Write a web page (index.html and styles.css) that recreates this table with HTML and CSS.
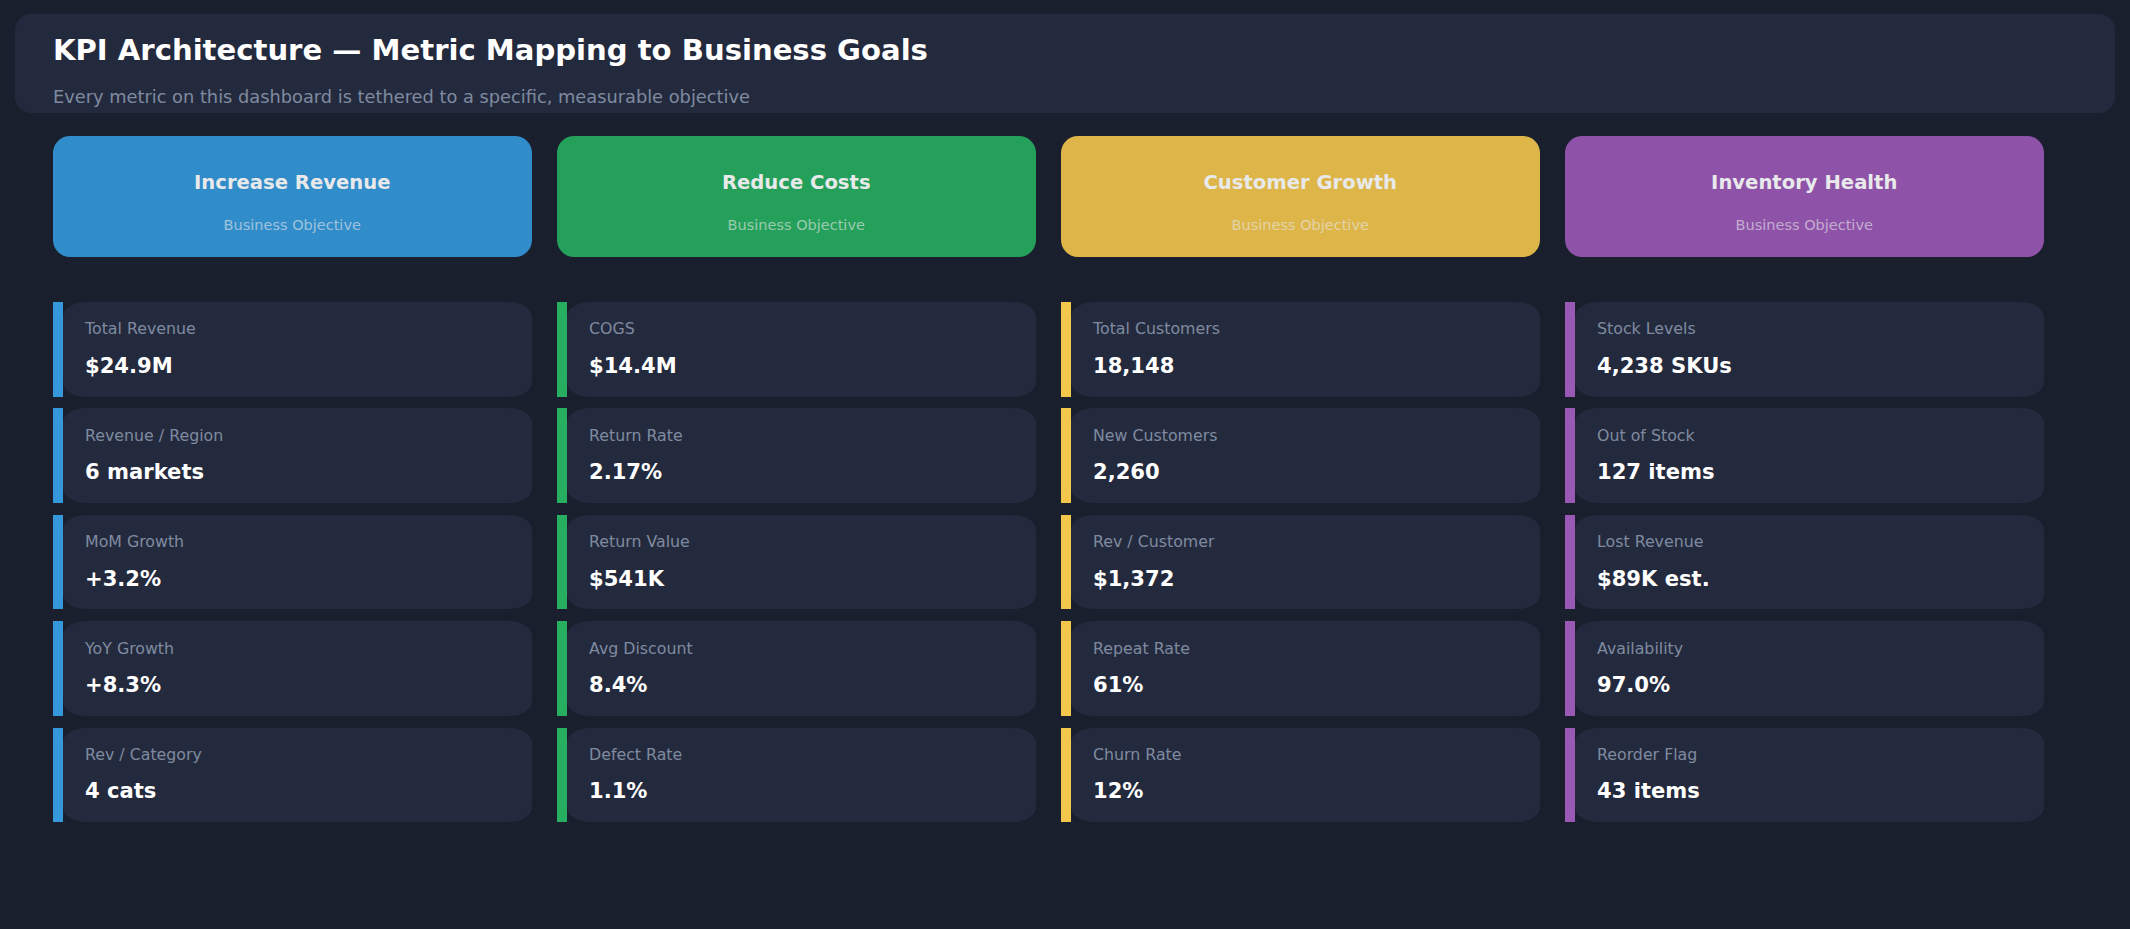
FILE: index.html
```html
<!DOCTYPE html>
<html lang="en">
<head>
<meta charset="utf-8">
<title>KPI Architecture</title>
<link rel="stylesheet" href="styles.css">
</head>
<body>
<header class="header">
  <h1 class="title">KPI Architecture — Metric Mapping to Business Goals</h1>
  <p class="subtitle">Every metric on this dashboard is tethered to a specific, measurable objective</p>
</header>
<main class="grid">
  <section class="column col-blue">
    <div class="objective"><div class="obj-title">Increase Revenue</div><div class="obj-sub">Business Objective</div></div>
    <div class="metrics">
      <div class="metric"><span class="bar"></span><div class="metric-card"><div class="label">Total Revenue</div><div class="value">$24.9M</div></div></div>
      <div class="metric"><span class="bar"></span><div class="metric-card"><div class="label">Revenue / Region</div><div class="value">6 markets</div></div></div>
      <div class="metric"><span class="bar"></span><div class="metric-card"><div class="label">MoM Growth</div><div class="value">+3.2%</div></div></div>
      <div class="metric"><span class="bar"></span><div class="metric-card"><div class="label">YoY Growth</div><div class="value">+8.3%</div></div></div>
      <div class="metric"><span class="bar"></span><div class="metric-card"><div class="label">Rev / Category</div><div class="value">4 cats</div></div></div>
    </div>
  </section>
  <section class="column col-green">
    <div class="objective"><div class="obj-title">Reduce Costs</div><div class="obj-sub">Business Objective</div></div>
    <div class="metrics">
      <div class="metric"><span class="bar"></span><div class="metric-card"><div class="label">COGS</div><div class="value">$14.4M</div></div></div>
      <div class="metric"><span class="bar"></span><div class="metric-card"><div class="label">Return Rate</div><div class="value">2.17%</div></div></div>
      <div class="metric"><span class="bar"></span><div class="metric-card"><div class="label">Return Value</div><div class="value">$541K</div></div></div>
      <div class="metric"><span class="bar"></span><div class="metric-card"><div class="label">Avg Discount</div><div class="value">8.4%</div></div></div>
      <div class="metric"><span class="bar"></span><div class="metric-card"><div class="label">Defect Rate</div><div class="value">1.1%</div></div></div>
    </div>
  </section>
  <section class="column col-yellow">
    <div class="objective"><div class="obj-title">Customer Growth</div><div class="obj-sub">Business Objective</div></div>
    <div class="metrics">
      <div class="metric"><span class="bar"></span><div class="metric-card"><div class="label">Total Customers</div><div class="value">18,148</div></div></div>
      <div class="metric"><span class="bar"></span><div class="metric-card"><div class="label">New Customers</div><div class="value">2,260</div></div></div>
      <div class="metric"><span class="bar"></span><div class="metric-card"><div class="label">Rev / Customer</div><div class="value">$1,372</div></div></div>
      <div class="metric"><span class="bar"></span><div class="metric-card"><div class="label">Repeat Rate</div><div class="value">61%</div></div></div>
      <div class="metric"><span class="bar"></span><div class="metric-card"><div class="label">Churn Rate</div><div class="value">12%</div></div></div>
    </div>
  </section>
  <section class="column col-purple">
    <div class="objective"><div class="obj-title">Inventory Health</div><div class="obj-sub">Business Objective</div></div>
    <div class="metrics">
      <div class="metric"><span class="bar"></span><div class="metric-card"><div class="label">Stock Levels</div><div class="value">4,238 SKUs</div></div></div>
      <div class="metric"><span class="bar"></span><div class="metric-card"><div class="label">Out of Stock</div><div class="value">127 items</div></div></div>
      <div class="metric"><span class="bar"></span><div class="metric-card"><div class="label">Lost Revenue</div><div class="value">$89K est.</div></div></div>
      <div class="metric"><span class="bar"></span><div class="metric-card"><div class="label">Availability</div><div class="value">97.0%</div></div></div>
      <div class="metric"><span class="bar"></span><div class="metric-card"><div class="label">Reorder Flag</div><div class="value">43 items</div></div></div>
    </div>
  </section>
</main>
</body>
</html>
```

FILE: styles.css
```css
html, body {
  margin: 0;
  background: #1a1f2d;
}

body {
  padding: 14px 15px;
  font-family: "DejaVu Sans", "Liberation Sans", sans-serif;
  color: #ffffff;
}

.header {
  background: #242a3d;
  border-radius: 16px;
  padding: 19px 38px 6px;
}

.title {
  margin: 0 0 19px;
  font-size: 29.1px;
  font-weight: bold;
  line-height: normal;
  color: #ffffff;
}

.subtitle {
  margin: 0;
  font-size: 17.8px;
  color: #7f8aa0;
}

.grid {
  display: grid;
  grid-template-columns: repeat(4, 478.5px);
  column-gap: 25.5px;
  margin: 23.2px 0 0 38px;
}

.column {
  display: flex;
  flex-direction: column;
}

.objective {
  border-radius: 17px;
  padding: 34.6px 16px 24px;
  text-align: center;
  opacity: 0.9;
}

.obj-title {
  font-size: 19.6px;
  font-weight: bold;
  color: #ffffff;
}

.obj-sub {
  margin-top: 23px;
  font-size: 14.5px;
  color: rgba(255, 255, 255, 0.6);
}

.metrics {
  display: flex;
  flex-direction: column;
  gap: 11.9px;
  margin-top: 45.3px;
}

.metric {
  display: flex;
  height: 94.5px;
}

.bar {
  width: 10px;
  flex: none;
}

.metric-card {
  flex: 1;
  background: #242a3d;
  border-radius: 22px / 15px;
  padding: 17.3px 22px 0;
}

.label {
  font-size: 15.8px;
  color: #7f8aa0;
  margin-bottom: 14.4px;
}

.value {
  font-size: 21.1px;
  font-weight: bold;
  color: #ffffff;
}

.col-blue .objective { background: #3498db; }
.col-blue .bar { background: #3498db; }
.col-green .objective { background: #27ae60; }
.col-green .bar { background: #27ae60; }
.col-yellow .objective { background: #f3c64c; }
.col-yellow .bar { background: #f3c64c; }
.col-purple .objective { background: #9b59b6; }
.col-purple .bar { background: #9b59b6; }
```
